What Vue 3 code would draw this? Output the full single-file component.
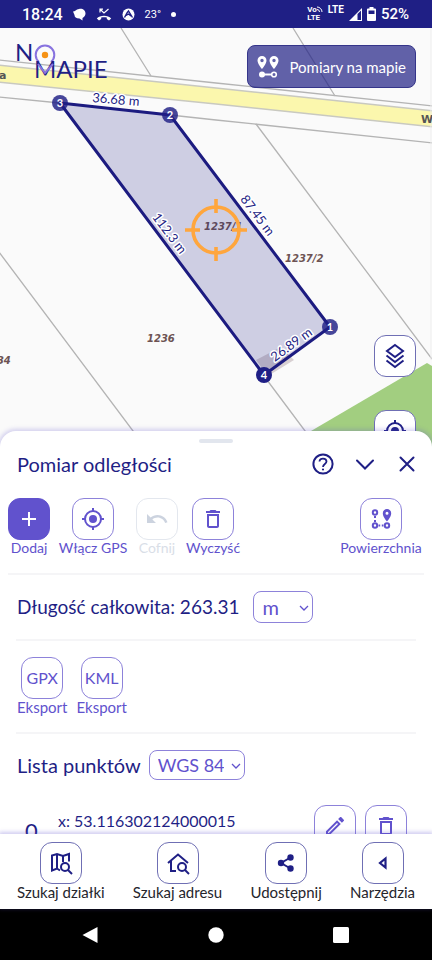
<script setup>
import { ref } from 'vue'

const unit = ref('m')
const system = ref('WGS 84')

const parcels = [
  { x: 147, y: 342, label: '1236' },
  { x: 285, y: 262, label: '1237/2' },
  { x: 204, y: 230, label: '1237/1' },
  { x: -17, y: 364, label: '1234' },
]
const sides = [
  { x: 116, y: 99, angle: 5, label: '36.68 m' },
  { x: 258, y: 215, angle: 53, label: '87.45 m' },
  { x: 170, y: 233, angle: 53, label: '112.3 m' },
  { x: 291, y: 344, angle: -36, label: '26.89 m' },
]
const vertices = [
  { x: 330, y: 327, n: 1 },
  { x: 170, y: 115, n: 2 },
  { x: 60, y: 103, n: 3 },
  { x: 264, y: 375, n: 4, strong: true },
]
</script>

<template>
  <div class="app">
    <header class="status">
      <div class="status-group">
        <span class="clock">18:24</span>
        <svg width="13" height="13" viewBox="0 0 13 13"><path d="M6 1C9 0 12.500 2 12.500 5.500C12.500 7.500 11 9 9.500 10L9.500 12.500L6.500 10.500C3 10.500 1.500 9 1.500 7L0 3.500C2 3.500 3 1.500 6 1Z" fill="#fff" /></svg>
        <svg width="16" height="13" viewBox="0 0 16 13"><path d="M.8 10.500C4 6.800 12 6.800 15.200 10.500L13 12.500L10.800 11V9.500C9 9 7 9 5.200 9.500V11L3 12.500Z" fill="#fff" /><path d="M4 4.500V1.200H7M4.300 1.500L8 5L12.500 1" fill="none" stroke="#fff" stroke-width="1.200" /></svg>
        <svg width="13" height="13" viewBox="0 0 13 13"><circle cx="6.500" cy="6.500" r="6" fill="#fff" /><path d="M2.500 9.500L5 5L6.500 3L10.500 9.500M4 7.500L6.500 6L9 8" fill="none" stroke="#1f1f85" stroke-width="1.400" /></svg>
        <span class="temp">23°</span>
        <span class="dot"></span>
      </div>
      <div class="status-group right">
        <span class="volte"><span>Vo<svg width="6" height="6" viewBox="0 0 6 6"><path d="M0 1A5 5 0 0 1 5 6M0 3.500A2.500 2.500 0 0 1 2.500 6" fill="none" stroke="#fff" /></svg></span><span>LTE</span></span>
        <span class="lte">LTE</span>
        <svg width="13" height="13" viewBox="0 0 13 13"><path d="M0 13L13 0V13Z" fill="#fff" /><path d="M8.500 6L12 2.500V12H8.500Z" fill="#1f1f85" /></svg>
        <svg width="9" height="14" viewBox="0 0 9 14"><path d="M2.500 0H6.500V1.500H8Q9 1.500 9 2.500V13Q9 14 8 14H1Q0 14 0 13V2.500Q0 1.500 1 1.500H2.500Z" fill="#fff" /><path d="M1.500 3.500H7.500V7H1.500Z" fill="#1f1f85" /></svg>
        <span class="battery">52%</span>
      </div>
    </header>

    <main class="map">
      <svg class="map-canvas" viewBox="0 28 432 419" preserveAspectRatio="xMidYMin slice" role="img" aria-label="Mapa działek">
        <rect y="28" width="432" height="419" fill="#fafafa" />
        <path d="M-2 65L216 88L434 111V127L216 104L-2 82Z" fill="#fbf7ad" stroke="#c9c9c0" stroke-width="1.500" />
        <g fill="none" stroke="#b4b4b4" stroke-width="1.300">
          <path d="M-2 60L216 83L434 106" />
          <path d="M-2 97L60 103L170 115L216 120L434 143" />
          <path d="M121 28L151 76M293 28L335 96M256 124L432 359M-1 252L145 447M264 376L317 447" />
        </g>
        <path d="M290 447L311 431L427 363L432 366V447Z" fill="#a2ce80" />
        <path d="M256 360L281 347L294 360L268 376Z" fill="#d8d0d2" />
        <path d="M431 28V360" stroke="#efefef" />
        <text class="street" x="-1" y="79">a</text>
        <text class="street" x="421" y="123">W</text>
        <text v-for="p in parcels" :key="p.label" class="parcel" :x="p.x" :y="p.y">{{ p.label }}</text>
        <path d="M60 103L170 115L330 327L264 375Z" fill="#1f1f85" fill-opacity=".2" stroke="#1c1b80" stroke-width="3" stroke-linejoin="round" />
        <g v-for="v in vertices" :key="v.n">
          <circle :cx="v.x" :cy="v.y" r="8" fill="#1f1f85" :fill-opacity="v.strong ? 1 : .82" />
          <text class="vertex" :x="v.x" :y="v.y + 4">{{ v.n }}</text>
        </g>
        <text v-for="s in sides" :key="s.label" class="side" :transform="`translate(${s.x} ${s.y}) rotate(${s.angle})`" y="5">{{ s.label }}</text>
        <g fill="none" stroke="#ffa63d" stroke-width="3.600">
          <circle cx="216" cy="230" r="23" />
          <path d="M216 199V213M216 247V261M185 230H200M232 230H247" />
        </g>
        <g>
          <text class="logo" x="15" y="61">N</text>
          <path d="M39 62A9.300 9.300 0 1 1 51 62" fill="none" stroke="#8873df" stroke-width="2" />
          <circle cx="45" cy="55" r="3.200" fill="#f59216" />
          <text class="logo" x="34" y="78">MAPIE</text>
          <path d="M38 64L45 73L53 64" fill="none" stroke="#8873df" stroke-width="2" />
        </g>
      </svg>

      <button class="measure" type="button">
        <svg width="22" height="22" viewBox="0 0 22 22"><path fill="#fff" fill-rule="evenodd" d="M5 0A4.500 4.500 0 0 1 9.500 4.500C9.500 8 5 13 5 13S.5 8 .5 4.500A4.500 4.500 0 0 1 5 0ZM5 2.800A1.700 1.700 0 1 0 5 6.200A1.700 1.700 0 1 0 5 2.800ZM17 0A4.500 4.500 0 0 1 21.500 4.500C21.500 8 17 13 17 13S12.500 8 12.500 4.500A4.500 4.500 0 0 1 17 0ZM17 2.800A1.700 1.700 0 1 0 17 6.200A1.700 1.700 0 1 0 17 2.800Z" /><circle cx="5" cy="18.500" r="3" fill="#fff" /><path d="M5 18.500H15" stroke="#fff" stroke-width="2" /><circle cx="17" cy="18.500" r="2.300" fill="none" stroke="#fff" stroke-width="1.600" /></svg>
        <span>Pomiary na mapie</span>
      </button>

      <div class="map-tools">
        <button class="tile navy" type="button" aria-label="Warstwy">
          <svg width="20" height="26" viewBox="0 0 20 26" fill="none" stroke="#1f1f85" stroke-width="2"><path d="M10 2L18 8L10 14L2 8Z" /><path d="M1.500 12.500L10 19L18.500 12.500M1.500 17.500L10 24L18.500 17.500" /></svg>
        </button>
        <button class="tile navy" type="button" aria-label="Moja lokalizacja">
          <svg width="24" height="24" viewBox="0 0 24 24" fill="none" stroke="#1f1f85" stroke-width="2"><circle cx="12" cy="12" r="8" /><circle cx="12" cy="12" r="4" fill="#1f1f85" stroke="none" /><path d="M12 1V4M12 20V23M1 12H4M20 12H23" /></svg>
        </button>
      </div>
    </main>

    <section class="sheet">
      <div class="handle"></div>
      <div class="sheet-head">
        <h1>Pomiar odległości</h1>
        <div class="head-actions">
          <button class="plain" type="button" aria-label="Pomoc">
            <svg width="24" height="24" viewBox="0 0 24 24" fill="none" stroke="#1f1f85" stroke-width="2"><circle cx="12" cy="12" r="9.600" /><path d="M8.500 9.500C8.500 5.500 15.500 5.800 15.500 9.500C15.500 12 12 12 12 15" stroke-width="1.800" /><circle cx="12" cy="17.500" r="1.100" fill="#1f1f85" stroke="none" /></svg>
          </button>
          <button class="plain" type="button" aria-label="Zwiń">
            <svg width="24" height="24" viewBox="0 0 24 24" fill="none" stroke="#1f1f85" stroke-width="2"><path d="M4 8.500L12 16.500L20 8.500" stroke-linecap="round" /></svg>
          </button>
          <button class="plain" type="button" aria-label="Zamknij">
            <svg width="24" height="24" viewBox="0 0 24 24" fill="none" stroke="#1f1f85" stroke-width="2"><path d="M5.500 5.500L18.500 18.500M18.500 5.500L5.500 18.500" stroke-linecap="round" /></svg>
          </button>
        </div>
      </div>

      <div class="toolbar">
        <button class="tool small" type="button">
          <span class="tile filled"><svg width="18" height="18" viewBox="0 0 18 18"><path d="M9 2V16M2 9H16" stroke="#fff" stroke-width="2" /></svg></span>
          <span>Dodaj</span>
        </button>
        <button class="tool gps" type="button">
          <span class="tile"><svg width="24" height="24" viewBox="0 0 24 24" fill="none" stroke="#6152cd" stroke-width="2"><circle cx="12" cy="12" r="8" /><circle cx="12" cy="12" r="4" fill="#6152cd" stroke="none" /><path d="M12 1V4M12 20V23M1 12H4M20 12H23" /></svg></span>
          <span>Włącz GPS</span>
        </button>
        <button class="tool small" type="button" disabled>
          <span class="tile"><svg width="24" height="24" viewBox="0 0 24 24"><path fill="#ccd3df" d="M12.500 8C9.850 8 7.450 8.990 5.600 10.600L2 7V16H11L7.380 12.380C8.770 11.220 10.540 10.500 12.500 10.500C16.040 10.500 19.050 12.810 20.100 16L22.470 15.220C21.080 11.030 17.150 8 12.500 8Z" /></svg></span>
          <span>Cofnij</span>
        </button>
        <button class="tool clear" type="button">
          <span class="tile"><svg width="24" height="24" viewBox="0 0 24 24"><path fill="#6152cd" d="M6 19C6 20.100 6.900 21 8 21H16C17.100 21 18 20.100 18 19V7H6V19ZM8 9H16V19H8V9ZM15.500 4L14.500 3H9.500L8.500 4H5V6H19V4H15.500Z" /></svg></span>
          <span>Wyczyść</span>
        </button>
        <button class="tool last" type="button">
          <span class="tile"><svg width="22" height="22" viewBox="0 0 22 22" fill="none" stroke="#6152cd" stroke-width="2"><circle cx="5" cy="4.500" r="2.200" /><circle cx="5" cy="17.500" r="2.200" /><circle cx="17" cy="17.500" r="2.200" /><path d="M5 8V10M5 12V14M8.500 17.500H10.200M11.800 17.500H13.500" /><path fill="#6152cd" stroke="none" fill-rule="evenodd" d="M17 1A4.200 4.200 0 0 1 21.200 5.200C21.200 9 17 13.500 17 13.500S12.800 9 12.800 5.200A4.200 4.200 0 0 1 17 1ZM17 3.700A1.500 1.500 0 1 0 17 6.700A1.500 1.500 0 1 0 17 3.700Z" /></svg></span>
          <span>Powierzchnia</span>
        </button>
      </div>

      <div class="total">
        <label for="unit">Długość całkowita: <strong>263.31</strong></label>
        <span class="picker unit">
          <select id="unit" v-model="unit"><option>m</option></select>
          <svg width="10" height="6" viewBox="0 0 10 6"><path d="M1 1L5 5L9 1" fill="none" stroke="#6152cd" stroke-width="1.300" /></svg>
        </span>
      </div>

      <div class="exports">
        <button class="tool" type="button"><span class="tile format">GPX</span><span>Eksport</span></button>
        <button class="tool" type="button"><span class="tile format">KML</span><span>Eksport</span></button>
      </div>

      <div class="list-head">
        <label for="system">Lista punktów</label>
        <span class="picker system">
          <select id="system" v-model="system"><option>WGS 84</option></select>
          <svg width="10" height="6" viewBox="0 0 10 6"><path d="M1 1L5 5L9 1" fill="none" stroke="#6152cd" stroke-width="1.300" /></svg>
        </span>
      </div>

      <div class="point">
        <span class="index">0</span>
        <span class="coords">x: 53.116302124000015</span>
        <button class="tile" type="button" aria-label="Edytuj">
          <svg width="24" height="24" viewBox="0 0 24 24"><path fill="#6152cd" d="M14.060 9.020L14.980 9.940L5.920 19H5V18.080L14.060 9.020ZM17.660 3C17.410 3 17.150 3.100 16.960 3.290L15.130 5.120L18.880 8.870L20.710 7.040C21.100 6.650 21.100 6.020 20.710 5.630L18.370 3.290C18.170 3.090 17.920 3 17.660 3ZM14.060 6.190L3 17.250V21H6.750L17.810 9.940L14.060 6.190Z" /></svg>
        </button>
        <button class="tile" type="button" aria-label="Usuń">
          <svg width="24" height="24" viewBox="0 0 24 24"><path fill="#6152cd" d="M6 19C6 20.100 6.900 21 8 21H16C17.100 21 18 20.100 18 19V7H6V19ZM8 9H16V19H8V9ZM15.500 4L14.500 3H9.500L8.500 4H5V6H19V4H15.500Z" /></svg>
        </button>
      </div>
    </section>

    <nav class="bottom">
      <button class="tool" type="button">
        <span class="tile navy"><svg width="24" height="24" viewBox="0 0 24 24" fill="none" stroke="#1f1f85" stroke-width="2"><path d="M11 19.500L8 17.500L3 19.500V4.500L8 3L14 5L20 3V10.500M8 3V17.500M14 5V11" /><circle cx="16" cy="16" r="4" /><path d="M19 19L23 23" /></svg></span>
        <span>Szukaj działki</span>
      </button>
      <button class="tool" type="button">
        <span class="tile navy"><svg width="24" height="24" viewBox="0 0 24 24" fill="none" stroke="#1f1f85" stroke-width="2"><path d="M2 12L12 3.500L22 12M5 10V20H10" /><circle cx="16" cy="16" r="4" /><path d="M19 19L23 23" /></svg></span>
        <span>Szukaj adresu</span>
      </button>
      <button class="tool" type="button">
        <span class="tile navy"><svg width="18" height="18" viewBox="0 0 18 18"><g fill="#1f1f85"><circle cx="4" cy="9" r="3.200" /><circle cx="13.500" cy="3.500" r="3.200" /><circle cx="13.500" cy="14.500" r="3.200" /></g><path d="M13.500 3.500L4 9L13.500 14.500" fill="none" stroke="#1f1f85" stroke-width="2" /></svg></span>
        <span>Udostępnij</span>
      </button>
      <button class="tool" type="button">
        <span class="tile navy"><svg width="14" height="14" viewBox="0 0 14 14"><path d="M9.500 2.500V11.500L4 7Z" fill="none" stroke="#1f1f85" stroke-width="2.200" /></svg></span>
        <span>Narzędzia</span>
      </button>
    </nav>

    <footer class="system-nav">
      <button class="plain" type="button" aria-label="Wstecz"><svg width="18" height="18" viewBox="0 0 18 18"><path d="M.5 9L15.500 1V17Z" fill="#fff" /></svg></button>
      <button class="plain" type="button" aria-label="Ekran główny"><svg width="18" height="18" viewBox="0 0 18 18"><circle cx="9" cy="9" r="7.700" fill="#fff" /></svg></button>
      <button class="plain" type="button" aria-label="Ostatnie"><svg width="18" height="18" viewBox="0 0 18 18"><rect x="1" y="1" width="16" height="16" rx="1.500" fill="#fff" /></svg></button>
    </footer>
  </div>
</template>

<style>
body {
  background: #fff;
}
</style>

<style scoped>
.app {
  --navy: #1f1f85;
  --violet: #6152cd;
  display: flex;
  flex-direction: column;
  height: 100vh;
  overflow: hidden;
  font-family: Lato, "Noto Sans", sans-serif;
  color: var(--navy);
}
.app *,
.app {
  box-sizing: border-box;
}
button,
select {
  font: inherit;
  color: inherit;
  margin: 0;
  padding: 0;
  border: 0;
  background: none;
}
svg {
  display: block;
  flex: none;
}

.status {
  flex: none;
  height: 28px;
  padding: 0 23px 0 22px;
  display: flex;
  align-items: center;
  justify-content: space-between;
  background: var(--navy);
  color: #fff;
  font-family: Roboto, sans-serif;
}
.status-group {
  display: flex;
  align-items: center;
  gap: 10px;
}
.status-group.right {
  gap: 5px;
}
.clock,
.battery {
  font-size: 15px;
  font-weight: 500;
}
.clock {
  font-size: 16px;
}
.temp {
  font-size: 11px;
}
.dot {
  width: 5px;
  height: 5px;
  border-radius: 50%;
  background: #fff;
}
.volte {
  display: flex;
  flex-direction: column;
  font-size: 8px;
  line-height: 8px;
  font-weight: 700;
}
.volte span {
  display: flex;
}
.lte {
  align-self: flex-start;
  font-size: 10px;
  line-height: 10px;
  font-weight: 700;
}

.map {
  position: relative;
  flex: 1 1 0;
  min-height: 0;
  background: #fafafa;
}
.map-canvas {
  position: absolute;
  inset: 0;
  width: 100%;
  height: 100%;
}
.street {
  font: 700 11px "DejaVu Sans", sans-serif;
  fill: #555;
}
.parcel {
  font: italic 700 10px "DejaVu Sans", sans-serif;
  fill: #6d5353;
}
.side {
  font: 13px Lato, sans-serif;
  text-anchor: middle;
  fill: #1f1f85;
  stroke: #fff;
  stroke-width: 3px;
  stroke-linejoin: round;
  paint-order: stroke;
}
.vertex {
  font: 700 11px Lato, sans-serif;
  text-anchor: middle;
  fill: #fff;
}
.logo {
  font: 24px Lato, sans-serif;
  fill: #1f1f85;
}
.measure {
  position: absolute;
  top: 17px;
  right: 16px;
  display: flex;
  align-items: center;
  gap: 10px;
  height: 43px;
  padding: 0 9px;
  border: 1px solid #35358a;
  border-radius: 8px;
  background: rgba(31, 31, 133, 0.7);
  color: #fff;
  font-size: 15px;
}
.map-tools {
  position: absolute;
  top: 307px;
  right: 16px;
  display: flex;
  flex-direction: column;
  gap: 33px;
}
.tile {
  flex: none;
  width: 42px;
  height: 42px;
  display: flex;
  align-items: center;
  justify-content: center;
  border: 1px solid #8d82da;
  border-radius: 12px;
  background: #fff;
}
.tile.navy {
  border-color: #6f6fb4;
}
.tile.filled {
  border-color: var(--violet);
  background: var(--violet);
}
.tile.format {
  font-size: 16px;
}

.sheet {
  position: relative;
  flex: 0 0 42%;
  margin-top: -16px;
  overflow: hidden;
  border-radius: 16px 16px 0 0;
  background: #fff;
  box-shadow: 0 0 4px 2px rgba(97, 82, 205, 0.25);
}
.handle {
  width: 34px;
  height: 4px;
  margin: 8px auto 0;
  border-radius: 2px;
  background: #e2e6ee;
}
.sheet-head {
  display: flex;
  align-items: center;
  justify-content: space-between;
  height: 42px;
  padding: 0 13px 0 17px;
}
h1,
label {
  margin: 0;
  font-size: 20px;
  line-height: 24px;
  font-weight: 400;
}
.total label {
  font-size: 19px;
}
strong {
  font-weight: 400;
}
.head-actions {
  display: flex;
  gap: 18px;
}
.toolbar {
  display: flex;
  gap: 9px;
  margin: 0 8px;
  padding-top: 13px;
  height: 90px;
  border-bottom: 2px solid #f5f5f7;
}
.tool {
  display: flex;
  flex-direction: column;
  align-items: center;
  color: var(--violet);
  font-size: 15px;
  line-height: 16px;
  white-space: nowrap;
}
.toolbar .tool {
  font-size: 14px;
}
.tool.small {
  width: 42px;
}
.tool.gps {
  width: 68px;
}
.tool.clear {
  width: 52px;
}
.tool.last {
  width: 86px;
  margin-left: auto;
}
.tool:disabled {
  color: #d9dee7;
}
.tool:disabled .tile {
  border-color: #e3e7ee;
}
.total {
  display: flex;
  align-items: center;
  gap: 14px;
  height: 66px;
  margin: 0 16px;
  padding-left: 1px;
  border-bottom: 2px solid #f5f5f7;
}
.picker {
  position: relative;
  display: block;
}
.picker select {
  appearance: none;
  width: 100%;
  height: 100%;
  padding: 0 20px 0 8px;
  border: 1px solid #8d82da;
  border-radius: 8px;
  color: var(--violet);
  font-size: 18px;
}
.picker svg {
  position: absolute;
  right: 4px;
  top: 50%;
  margin-top: -2px;
  pointer-events: none;
}
.picker.unit {
  width: 60px;
  height: 32px;
}
.picker.unit select {
  font-size: 20px;
}
.picker.system {
  width: 96px;
  height: 30px;
}
.exports {
  display: flex;
  gap: 9px;
  height: 93px;
  margin: 0 16px;
  padding: 16px 0 0 1px;
  border-bottom: 2px solid #f5f5f7;
}
.list-head {
  display: flex;
  align-items: center;
  gap: 8px;
  height: 62px;
  padding: 0 17px;
}
.point {
  display: flex;
  align-items: flex-start;
  gap: 9px;
  min-height: 52px;
  margin-top: 9px;
  padding: 0 25px;
}
.index {
  align-self: center;
  width: 24px;
  font-size: 22px;
}
.coords {
  flex: 1;
  padding-top: 5px;
  font-size: 16px;
  line-height: 22px;
}

.bottom {
  position: relative;
  flex: none;
  display: flex;
  justify-content: space-between;
  padding: 8px 17px 9px;
  background: #fff;
  box-shadow: 0 -1px 4px 1px rgba(97, 82, 205, 0.3);
}
.bottom .tool {
  color: #25252c;
}
.system-nav {
  flex: none;
  display: flex;
  align-items: center;
  justify-content: center;
  gap: 107px;
  height: 51px;
  background: #000;
}
</style>
